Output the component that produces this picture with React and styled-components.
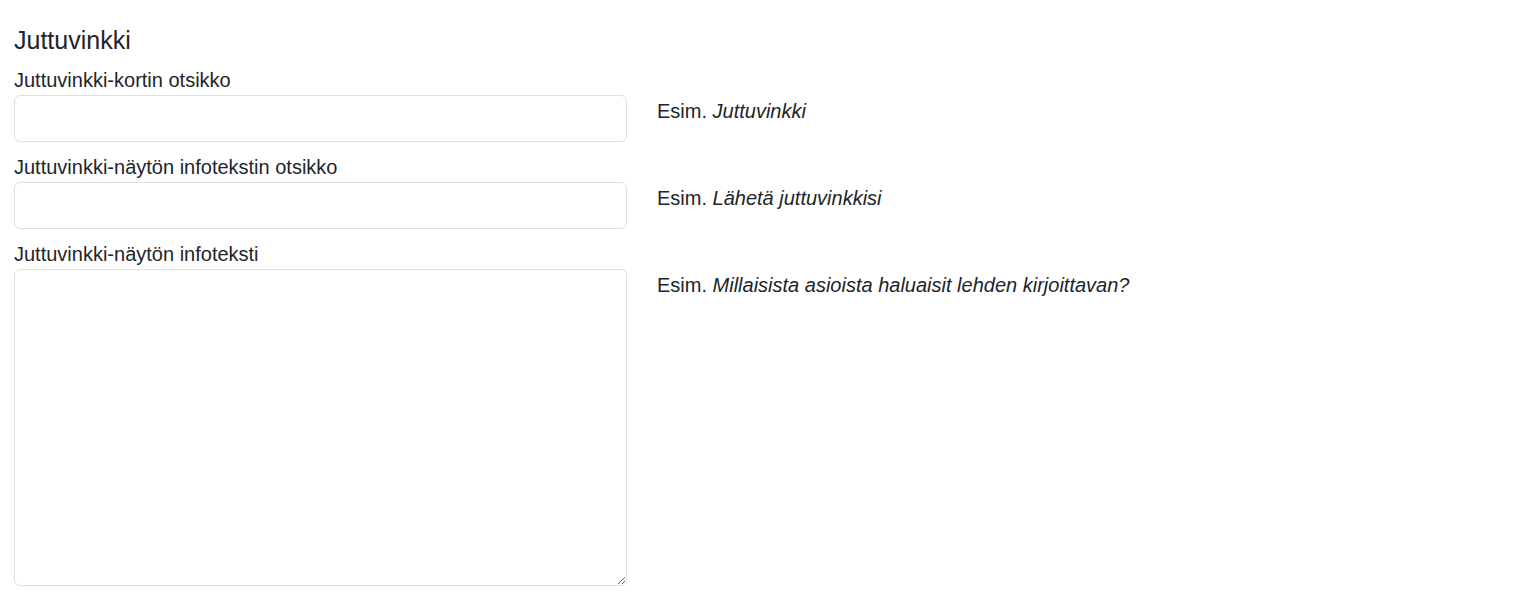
import React from 'react'
import styled, { createGlobalStyle } from 'styled-components'

const GlobalStyle = createGlobalStyle`
body {
  margin: 0;
  background: #fff;
  font-family: "Liberation Sans", Arial, sans-serif;
  color: #212529;
}
`

const Page = styled.div`
padding: 25px 14px 0 14px;
`

const Title = styled.h4`
margin: 0 0 13px 0;
font-size: 25px;
font-weight: 400;
line-height: 30px;
`

const Row = styled.div`
display: grid;
grid-template-columns: 613px 1fr;
column-gap: 30px;
margin-bottom: 13px;
`

const Field = styled.div`
display: flex;
flex-direction: column;
`

const Label = styled.label`
font-size: 20px;
line-height: 24px;
margin-bottom: 3px;
`

const Input = styled.input`
box-sizing: border-box;
height: 47px;
border: 1px solid #dcdfe3;
border-radius: 6px;
padding: 6px 15px;
font-size: 20px;
font-family: inherit;
outline: none;
`

const TextArea = styled.textarea`
box-sizing: border-box;
height: 317px;
border: 1px solid #dcdfe3;
border-radius: 6px;
padding: 6px 15px;
font-size: 20px;
font-family: inherit;
outline: none;
resize: vertical;
`

const Hint = styled.div`
padding-top: ${({ $top }) => $top || 31}px;
font-size: 20px;
line-height: 24px;
em {
  font-style: italic;
}
`

const fields = [
  { label: 'Juttuvinkki-kortin otsikko', example: 'Juttuvinkki' },
  { label: 'Juttuvinkki-näytön infotekstin otsikko', example: 'Lähetä juttuvinkkisi' },
  { label: 'Juttuvinkki-näytön infoteksti', example: 'Millaisista asioista haluaisit lehden kirjoittavan?', area: true },
]

const App = () => {
  return (
    <Page>
      <GlobalStyle />
      <Title>Juttuvinkki</Title>
      {fields.map((f) => (
        <Row key={f.label}>
          <Field>
            <Label>{f.label}</Label>
            {f.area ? <TextArea /> : <Input type="text" />}
          </Field>
          <Hint>
            Esim. <em>{f.example}</em>
          </Hint>
        </Row>
      ))}
    </Page>
  )
}

export default App
